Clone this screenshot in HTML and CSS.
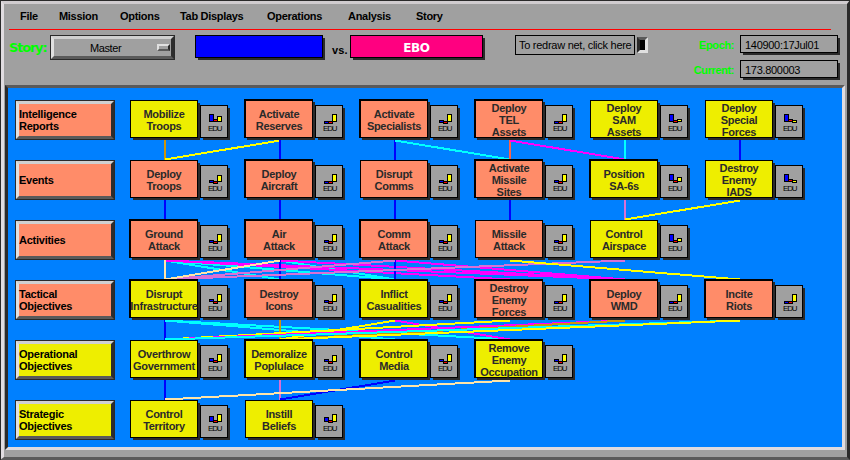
FILE: index.html
```html
<!DOCTYPE html>
<html lang="en">
<head>
<meta charset="utf-8">
<title>EBO</title>
<link rel="stylesheet" href="styles.css">
</head>
<body>
<main class="window">
  <nav class="menu">
    <span>File</span><span>Mission</span><span>Options</span><span>Tab Displays</span><span>Operations</span><span>Analysis</span><span>Story</span>
  </nav>
  <header class="toolbar">
    <span class="story-label">Story:</span>
    <div class="select"><span>Master</span><i class="knob"></i></div>
    <div class="side blue"></div>
    <span class="versus">vs.</span>
    <div class="side pink">EBO</div>
    <div class="redraw">To redraw net, click here</div>
    <div class="check"></div>
    <div class="clocks">
      <span class="clock-label">Epoch:</span><span class="clock">140900:17Jul01</span>
      <span class="clock-label">Current:</span><span class="clock">173.800003</span>
    </div>
  </header>
  <section class="board">
    <svg class="links" id="links" width="834" height="359" viewBox="8 88 834 359" shape-rendering="crispEdges"></svg>
    <div class="rows" id="rows"></div>
  </section>
</main>
<script src="net.js"></script>
</body>
</html>
```
FILE: styles.css
```css
* { box-sizing: border-box; }
body {
  margin: 0;
  width: 850px;
  height: 460px;
  overflow: hidden;
  background: #a0a0a0;
  font: bold 11px/12px "Liberation Sans", Arial, sans-serif;
  letter-spacing: -0.3px;
  color: #000;
}
.window {
  width: 850px;
  height: 460px;
  padding: 0 0 0 1px;
  border-style: solid;
  border-width: 4px 3px 3px 4px;
  border-color: #d0cccf #2a2a2a #5a5a5a #e0dce0;
  box-shadow: inset 0 0 0 0 #000;
  background:
    linear-gradient(#2a2a2a, #2a2a2a) 0 0 / 100% 1px no-repeat border-box,
    #a0a0a0;
}
.window::before {
  content: "";
  position: absolute;
  left: 0;
  top: 0;
  width: 850px;
  height: 460px;
  border-left: 1px solid #2a2a2a;
  border-top: 1px solid #2a2a2a;
  pointer-events: none;
}
.menu {
  display: grid;
  grid-template-columns: 39px 61px 60px 87px 81px 68px 1fr;
  width: 822px;
  height: 26px;
  margin-left: 4px;
  padding: 6px 0 0 11px;
  border-bottom: 1px solid #ff0000;
  white-space: nowrap;
}
.toolbar {
  display: flex;
  align-items: flex-start;
  height: 55px;
  padding: 5px 0 0 4px;
  white-space: nowrap;
}
.story-label {
  width: 41px;
  padding-top: 5px;
  color: #0f0;
  font: bold 13px/16px "DejaVu Sans", sans-serif;
  letter-spacing: -1.2px;
}
.select {
  display: flex;
  align-items: center;
  width: 125px;
  height: 25px;
  border: 4px solid;
  border-color: #d0d0d0 #2d2d2d #5a5a5a #e0e0e0;
  outline: 1px solid #2a2a2a;
  outline-offset: -1px;
  font-weight: normal;
  letter-spacing: -0.4px;
}
.select span { width: 103px; padding-left: 36px; }
.knob {
  width: 13px;
  height: 7px;
  border: 2px solid;
  border-color: #e0e0e0 #2a2a2a #5a5a5a #e0e0e0;
}
.side {
  height: 23px;
  border: 1px solid #000;
  box-shadow: 2.5px 2.5px 0 -0.5px #2a2a2a;
}
.blue { width: 128px; margin-left: 20px; margin-right: 1px; background: #00f; }
.pink {
  width: 133px;
  background: #ff0080;
  color: #fff;
  font: bold 12px/24px "DejaVu Sans", sans-serif;
  letter-spacing: -0.4px;
  text-align: center;
}
.versus { width: 26px; padding: 9px 0 0 8px; letter-spacing: 0.1px; }
.redraw {
  width: 120px;
  height: 20px;
  margin-left: 32px;
  padding: 3px 0 0 3px;
  border: 1px solid #000;
  font-weight: normal;
  letter-spacing: -0.27px;
}
.check {
  width: 11px;
  height: 16px;
  margin: 2px 0 0 2px;
  background: #000;
  border: 3px solid;
  border-color: #5a5a5a #e0e0e0 #e0e0e0 #2a2a2a;
}
.clocks {
  display: grid;
  grid-template-columns: 87px 98px;
  column-gap: 5px;
  row-gap: 7px;
}
.clock-label { padding: 4px 1px 0 0; text-align: right; color: #0f0; letter-spacing: -0.4px; }
.clock {
  height: 18px;
  padding: 3px 0 0 4px;
  border: 1px solid #000;
  box-shadow: 2.5px 2.5px 0 -0.5px #2a2a2a;
  font-weight: normal;
  letter-spacing: -0.3px;
}
.board {
  position: relative;
  width: 840px;
  height: 365px;
  background: #0080ff;
  border: 3px solid;
  border-color: #5a5a5a #e0dce0 #e0dce0 #2a2a2a;
}
.links { position: absolute; left: 0; top: 0; }
.rows { position: relative; padding: 12px 0 0 7px; }
.row { display: flex; height: 60px; }
.stage {
  display: flex;
  align-items: center;
  width: 100px;
  height: 40px;
  margin-right: 15px;
  border: 4px solid;
  border-color: #d0d0d0 #2d2d2d #5a5a5a #e0e0e0;
  outline: 1px solid #2a2a2a;
  outline-offset: -1px;
  white-space: pre;
  letter-spacing: -0.25px;
}
.item { display: flex; width: 115px; }
.node {
  display: flex;
  align-items: center;
  justify-content: center;
  width: 68px;
  height: 38px;
  margin-right: 2px;
  border: 1px solid #000;
  box-shadow: 2.5px 2.5px 0 -0.5px #2a2a2a;
  color: #2a2a2a;
  text-align: center;
  white-space: pre;
}
.node span { padding-top: 2px; }
.thick { width: 69px; height: 39px; margin: -1px 2px 0 -1px; border-width: 2px 1px 1px 2px; }
.salmon { background: #ff8c69; }
.yellow { background: #eeee00; }
.edu {
  width: 28px;
  height: 33px;
  margin-top: 5px;
  background: #a0a0a0;
  border: 1px solid #000;
  box-shadow: 2.5px 2.5px 0 -0.5px #2a2a2a;
  font: 8px/7px "Liberation Sans", Arial, sans-serif;
  letter-spacing: -1.2px;
  padding-left: 7px;
  color: #000;
}
.edu svg { display: block; margin-left: -7px; }
```
FILE: net.js
```js
const S = 'salmon', Y = 'yellow';
// node: [label, fill, thick border, [blue top, bottom, red top, bottom, yellow top, bottom]]
const C = [16, 19, 16, 19, 9, 17], D = [15, 18, 16, 19, 9, 17], I = [14, 17, 16, 19, 9, 17];
const rows = [
  ['Intelligence\nReports', S, [
    ['Mobilize\nTroops', Y, 0, [9, 17, 14, 17, 11, 17]],
    ['Activate\nReserves', S, 1, C],
    ['Activate\nSpecialists', S, 1, D],
    ['Deploy\nTEL\nAssets', S, 1, C],
    ['Deploy\nSAM\nAssets', Y, 0, [9, 17, 15, 18, 14, 17]],
    ['Deploy\nSpecial\nForces', Y, 0, [9, 17, 14, 17, 15, 18]]]],
  ['Events', S, [
    ['Deploy\nTroops', S, 0, [15, 18, 16, 19, 10, 17]],
    ['Deploy\nAircraft', S, 1, C],
    ['Disrupt\nComms', S, 0, D],
    ['Activate\nMissile\nSites', S, 1, D],
    ['Position\nSA-6s', Y, 1, [9, 16, 15, 18, 12, 17]],
    ['Destroy\nEnemy\nIADS', Y, 0, [9, 17, 14, 17, 15, 18]]]],
  ['Activities', S, [
    ['Ground\nAttack', S, 1, D],
    ['Air\nAttack', S, 1, D],
    ['Comm\nAttack', S, 1, D],
    ['Missile\nAttack', S, 0, D],
    ['Control\nAirspace', Y, 0, [9, 17, 15, 18, 13, 17]]]],
  ['Tactical\nObjectives', S, [
    ['Disrupt\nInfrastructure', Y, 1, I],
    ['Destroy\nIcons', S, 1, D],
    ['Inflict\nCasualities', Y, 1, D],
    ['Destroy\nEnemy\nForces', S, 1, C],
    ['Deploy\nWMD', S, 1, C],
    ['Incite\nRiots', S, 1, C]]],
  ['Operational\nObjectives', Y, [
    ['Overthrow\nGovernment', Y, 0, [13, 17, 15, 18, 9, 17]],
    ['Demoralize\nPoplulace', Y, 1, [14, 17, 16, 19, 10, 17]],
    ['Control\nMedia', Y, 1, I],
    ['Remove\nEnemy\nOccupation', Y, 1, I]]],
  ['Strategic\nObjectives', Y, [
    ['Control\nTerritory', Y, 0, [11, 17, 15, 18, 9, 17]],
    ['Instill\nBeliefs', Y, 0, [12, 17, 15, 18, 9, 17]]]]
];
const bar = (x, t, b, fill) =>
  `<rect x="${x}" y="${t - 1}" width="5" height="${b - t}" fill="#000"/><rect x="${x + 1}" y="${t}" width="3" height="${b - t - 2}" fill="${fill}"/>`;
document.getElementById('rows').innerHTML = rows.map(([name, fill, nodes]) =>
  `<div class="row"><div class="stage ${fill}">${name}</div>` + nodes.map(([label, f, thick, b]) =>
    `<div class="item"><div class="node ${f}${thick ? ' thick' : ''}"><span>${label}</span></div><div class="edu">` +
    `<svg width="26" height="19" shape-rendering="crispEdges">${bar(8, b[0], b[1], '#00f')}${bar(12, b[2], b[3], '#f00')}${bar(16, b[4], b[5], '#ff0')}</svg>EDU</div></div>`
  ).join('') + '</div>').join('');

// link: [row, from column, to column, colour]
const O = '#cd950c', B = '#0000ff', K = '#00ffff', M = '#ff00ff', P = '#da70d6', W = '#ffe4a8', L = '#ffff00';
const links = [
  [0, 0, 0, O], [0, 1, 0, L], [0, 1, 1, B], [0, 2, 2, B], [0, 2, 3, K], [0, 3, 3, '#ff6347'], [0, 3, 4, M], [0, 4, 4, K], [0, 5, 5, B],
  [1, 0, 0, B], [1, 1, 1, B], [1, 2, 2, B], [1, 3, 3, B], [1, 4, 4, P], [1, 5, 4, L],
  [2, 0, 1, K], [2, 0, 2, K], [2, 1, 2, K], [2, 0, 3, M], [2, 0, 4, M], [2, 1, 4, M], [2, 2, 4, M],
  [2, 1, 1, B], [2, 2, 2, B], [2, 2, 0, P], [2, 4, 0, P], [2, 0, 0, W], [2, 1, 0, W], [2, 3, 5, L],
  [3, 0, 0, B], [3, 0, 2, K], [3, 0, 3, K], [3, 1, 1, O], [3, 2, 1, L], [3, 2, 3, M], [3, 3, 0, L], [3, 4, 0, M], [3, 4, 1, O], [3, 5, 0, K], [3, 5, 1, L],
  [4, 0, 0, B], [4, 1, 1, P], [4, 2, 1, B], [4, 3, 0, W]
];
document.getElementById('links').innerHTML = links.map(([r, a, b, c]) =>
  `<line x1="${165 + 115 * a}" y1="${a === b ? 138 + 60 * r : 140.5 + 60 * r}" x2="${165 + 115 * b}" y2="${159.5 + 60 * r}" stroke="${c}" stroke-width="2"/>`).join('');
```
